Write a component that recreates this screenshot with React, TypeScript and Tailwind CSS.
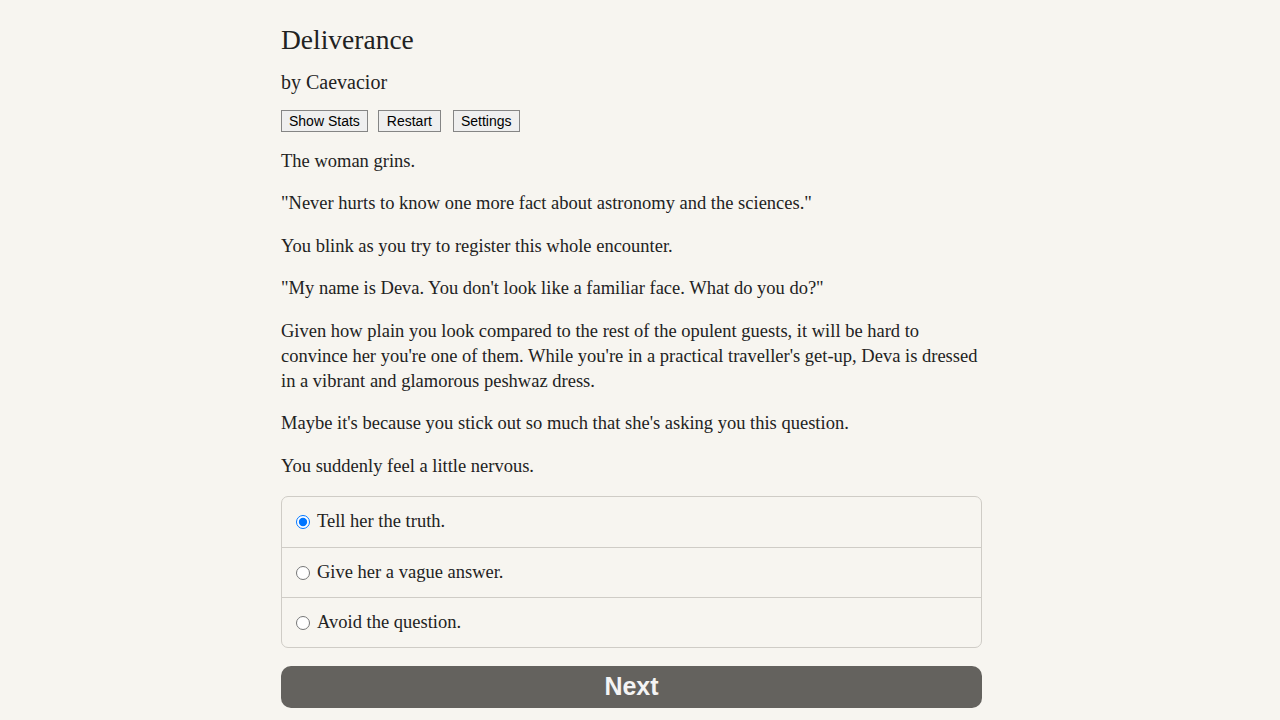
import React from "react";

const serif = { fontFamily: '"Liberation Serif", "Times New Roman", serif' };

export default function App() {
  const paras: React.ReactNode[] = [
    "The woman grins.",
    "\"Never hurts to know one more fact about astronomy and the sciences.\"",
    "You blink as you try to register this whole encounter.",
    "\"My name is Deva. You don't look like a familiar face. What do you do?\"",
    <>
      <span className="whitespace-nowrap">Given how plain you look compared to the rest of the opulent guests, it will be hard to</span>
      <br />
      <span className="whitespace-nowrap">convince her you're one of them. While you're in a practical traveller's get-up, Deva is dressed</span>
      <br />
      in a vibrant and glamorous peshwaz dress.
    </>,
    "Maybe it's because you stick out so much that she's asking you this question.",
    "You suddenly feel a little nervous.",
  ];
  const options = ["Tell her the truth.", "Give her a vague answer.", "Avoid the question."];
  return (
    <div className="min-h-[720px] w-full bg-[#f7f5f0] text-[#222]" style={serif}>
      <div className="ml-[281px] w-[701px] pt-[25px]">
        <div className="text-[27.5px] leading-[30px]">Deliverance</div>
        <div className="mt-[15px] text-[20px] leading-[24px]">by Caevacior</div>
        <div className="mt-[16px] flex h-[22px]" style={{ fontFamily: '"Liberation Sans", Arial, sans-serif' }}>
          <button className="mr-[10px] h-[22px] border border-[#858585] bg-[#efefef] px-[7px] text-[14px] leading-[20px] text-black">
            Show Stats
          </button>
          <button className="mr-[12px] h-[22px] border border-[#858585] bg-[#efefef] px-[8px] text-[14px] leading-[20px] text-black">
            Restart
          </button>
          <button className="h-[22px] border border-[#858585] bg-[#efefef] px-[7px] text-[14px] leading-[20px] text-black">
            Settings
          </button>
        </div>
        <div className="mt-[16.5px] text-[18.5px] leading-[25px]">
          {paras.map((p, i) => (
            <p key={i} className={i === 0 ? "" : "mt-[17.5px]"}>
              {p}
            </p>
          ))}
        </div>
        <div className="mt-[17.5px] rounded-[7px] border border-[#cfccc6] text-[18.5px]">
          {options.map((o, i) => (
            <label
              key={o}
              className={
                "flex h-[50px] items-center pl-[14px] " + (i > 0 ? "border-t border-[#cfccc6]" : "")
              }
            >
              <input
                type="radio"
                name="choice"
                defaultChecked={i === 0}
                className="m-0 h-[14px] w-[14px] accent-[#0075ff]"
              />
              <span className="ml-[7px]">{o}</span>
            </label>
          ))}
        </div>
        <button
          className="mt-[18px] block h-[42px] w-[701px] rounded-[10px] bg-[#64625e] text-[25px] font-bold text-[#f4f4f4]"
          style={{ fontFamily: '"Liberation Sans", Arial, sans-serif' }}
        >
          Next
        </button>
      </div>
    </div>
  );
}
